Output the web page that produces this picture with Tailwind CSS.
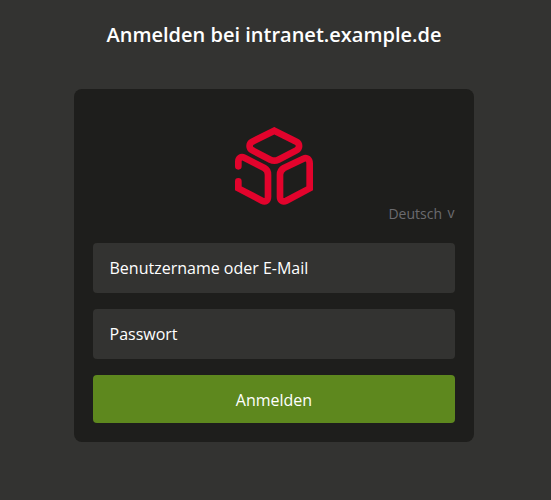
<!DOCTYPE html>
<html lang="de">
<head>
<meta charset="utf-8">
<title>Anmelden</title>
<script src="https://cdn.jsdelivr.net/npm/@tailwindcss/browser@4"></script>
</head>
<body class="bg-[#333331] h-[500px] overflow-hidden text-white font-['Open_Sans','Noto_Sans',sans-serif]">
<main class="w-[400px] ml-[74px] pt-5">
  <h1 class="text-center text-[20px] leading-[30px] font-semibold whitespace-nowrap">Anmelden bei intranet.example.de</h1>
  <form class="mt-[39px] h-[353px] rounded-lg bg-[#1e1e1c] px-[19px] pt-[38px] flex flex-col">
    <svg class="block self-center w-[78px] h-[78px] shrink-0" viewBox="33 33 234 234" fill="none" stroke="#e2032c" stroke-width="20" stroke-linecap="round">
      <path d="M151 44L217 77C228 83 228 97 217 103L163 131Q151 137 139 131L85 103C74 97 74 83 85 77Z"/>
      <path d="M43 151V137C43 126 51 120 61 125L121 156Q132 162 132 176V243C132 254 124 259 114 254L43 217V196"/>
      <path d="M257 217V143C257 130 249 123 238 128L180 156Q168 163 168 176V243C168 254 177 259 187 254Z"/>
    </svg>
    <div class="self-end -mt-px flex items-center gap-1 h-5 text-sm leading-5 text-[#6b6b6f]"><span class="relative -left-px">Deutsch</span><span class="relative -top-px w-2 text-center">v</span></div>
    <input type="text" placeholder="Benutzername oder E-Mail" class="mt-[19px] w-full h-[50px] shrink-0 rounded bg-[#333331] px-[16.5px] text-base text-white placeholder:text-white outline-none">
    <input type="password" placeholder="Passwort" class="mt-4 w-full h-[50px] shrink-0 rounded bg-[#333331] px-[16.5px] text-base text-white placeholder:text-white outline-none">
    <button type="button" class="mt-4 w-full h-12 shrink-0 rounded bg-[#5e881e] pt-0.5 text-base text-white">Anmelden</button>
  </form>
</main>
</body>
</html>
